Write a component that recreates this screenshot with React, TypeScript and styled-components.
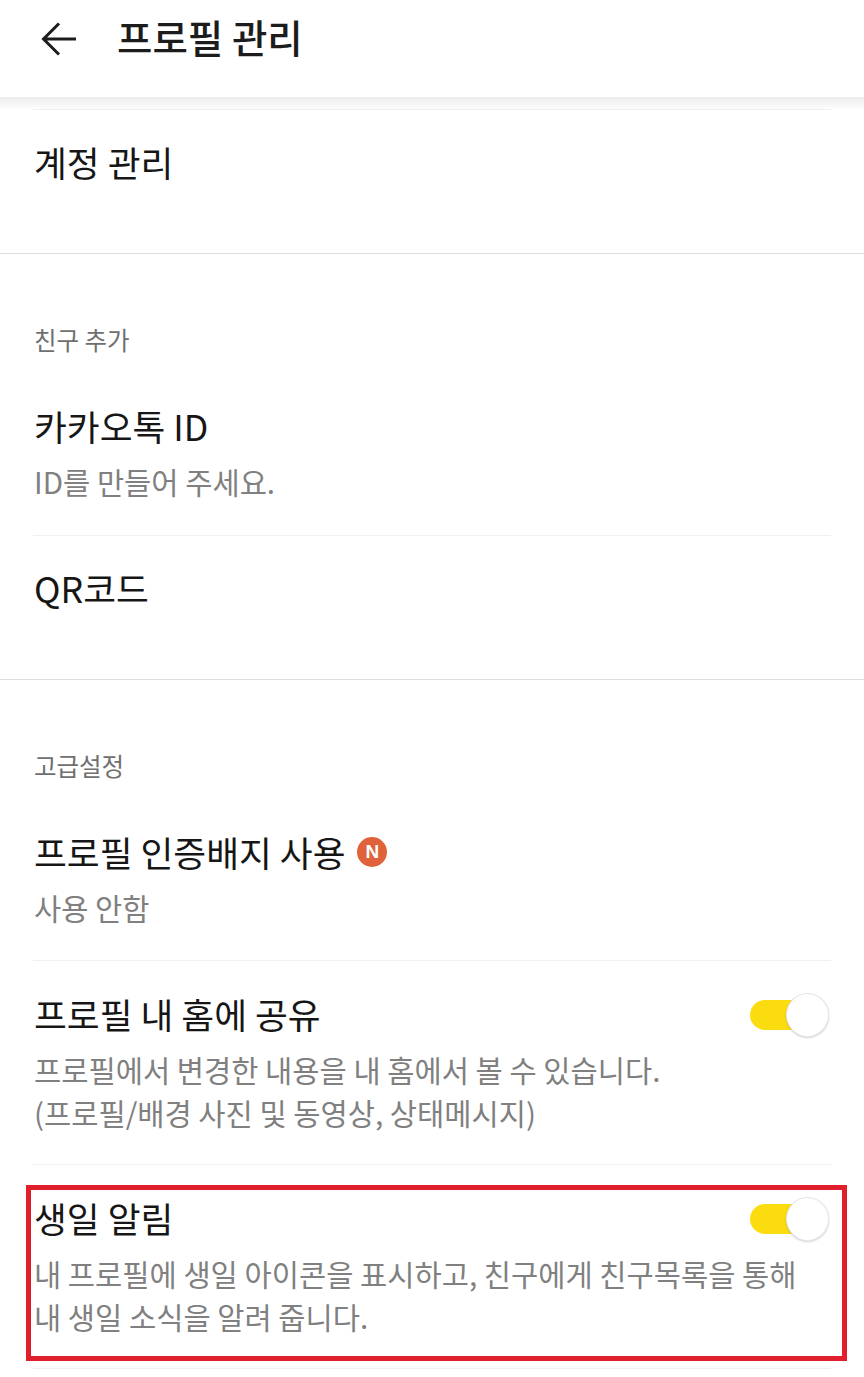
import React from 'react';
import styled, { createGlobalStyle } from 'styled-components';

const Global = createGlobalStyle`
  html, body { margin: 0; padding: 0; background: #fff; }
  body { font-family: "Noto Sans CJK KR", "Noto Sans", sans-serif; color: #1a1a1a; }
`;
const Page = styled.div`
  position: relative;
  width: 864px;
  height: 1377px;
  overflow: hidden;
  background: #fff;
`;
const Header = styled.header`
  height: 97px;
  display: flex;
  align-items: center;
  padding-left: 40px;
  gap: 39px;
  background: #fff;
`;
const Shade = styled.div`
  height: 12px;
  background: linear-gradient(#ececec, #fdfdfd);
`;
const BackIcon = styled.svg`
  width: 38px;
  height: 38px;
  margin-top: -20px;
  display: block;
`;
const Title = styled.h1`
  margin: -25px 0 0;
  font-size: 38.5px;
  font-weight: 500;
  line-height: 1.2;
  color: #1c1c1c;
`;
const Section = styled.section<{ $h: number; $last?: boolean }>`
  height: ${(p) => p.$h}px;
  box-sizing: border-box;
  border-bottom: ${(p) => (p.$last ? 'none' : '1px solid #dedede')};
`;
const Label = styled.div<{ $top: number }>`
  padding: ${(p) => p.$top}px 34px 0;
  font-size: 24.5px;
  line-height: 34px;
  color: #6f6f6f;
`;
const Row = styled.div<{ $h: number; $line?: boolean; $pad: number }>`
  height: ${(p) => p.$h}px;
  box-sizing: border-box;
  margin: 0 33px;
  padding: ${(p) => p.$pad}px 1px 0;
  display: flex;
  justify-content: space-between;
  align-items: flex-start;
  border-top: ${(p) => (p.$line ? '1px solid #f0f0f0' : 'none')};
`;
const Texts = styled.div`
  display: flex;
  flex-direction: column;
  min-width: 0;
`;
const Name = styled.div`
  display: flex;
  align-items: center;
  gap: 12px;
  font-size: 35.7px;
  line-height: 48px;
  color: #161616;
  white-space: nowrap;
`;
const Desc = styled.div<{ $mt: number }>`
  margin-top: ${(p) => p.$mt}px;
  font-size: 29.6px;
  line-height: 43px;
  color: #808080;
  white-space: nowrap;
`;
const NBadge = styled.span`
  width: 30px;
  height: 30px;
  border-radius: 50%;
  background: #e0623a;
  color: #fff;
  font-family: "Liberation Sans", sans-serif;
  font-size: 19px;
  font-weight: 700;
  line-height: 30px;
  text-align: center;
`;
const Toggle = styled.div`
  position: relative;
  flex: none;
  width: 78px;
  height: 30px;
  margin: 10px 2px 0 0;
  border-radius: 15px;
  background: #fbdc0e;
`;
const Knob = styled.span`
  position: absolute;
  right: -1px;
  top: -7px;
  width: 43px;
  height: 44px;
  box-sizing: border-box;
  border-radius: 50%;
  background: #fff;
  border: 1px solid #e6e6e6;
  box-shadow: 0 1px 2px rgba(0, 0, 0, 0.18);
`;
const Highlight = styled.div`
  position: absolute;
  left: 26px;
  top: 1185px;
  width: 821px;
  height: 176px;
  box-sizing: border-box;
  border: 5px solid #e01f2d;
  pointer-events: none;
`;

export default function App() {
  return (
    <Page>
      <Global />
      <Header>
        <BackIcon viewBox="0 0 38 38" fill="none" stroke="#1c1c1c" strokeWidth="3" aria-hidden="true">
          <path d="M36 19H4M19 3.5 3.5 19 19 34.5" />
        </BackIcon>
        <Title>프로필 관리</Title>
      </Header>
      <Shade />
      <Section $h={145}>
        <Row $h={144} $line $pad={28}>
          <Texts>
            <Name>계정 관리</Name>
          </Texts>
        </Row>
      </Section>
      <Section $h={426}>
        <Label $top={69}>친구 추가</Label>
        <Row $h={178} $pad={45}>
          <Texts>
            <Name>카카오톡 ID</Name>
            <Desc $mt={10}>ID를 만들어 주세요.</Desc>
          </Texts>
        </Row>
        <Row $h={144} $line $pad={28}>
          <Texts>
            <Name>QR코드</Name>
          </Texts>
        </Row>
      </Section>
      <Section $h={700} $last>
        <Label $top={69}>고급설정</Label>
        <Row $h={177} $pad={45}>
          <Texts>
            <Name>
              프로필 인증배지 사용
              <NBadge>N</NBadge>
            </Name>
            <Desc $mt={10}>사용 안함</Desc>
          </Texts>
        </Row>
        <Row $h={204} $line $pad={29}>
          <Texts>
            <Name>프로필 내 홈에 공유</Name>
            <Desc $mt={10}>
              프로필에서 변경한 내용을 내 홈에서 볼 수 있습니다.
              <br />
              (프로필/배경 사진 및 동영상, 상태메시지)
            </Desc>
          </Texts>
          <Toggle>
            <Knob />
          </Toggle>
        </Row>
        <Row $h={204} $line $pad={29}>
          <Texts>
            <Name>생일 알림</Name>
            <Desc $mt={10}>
              내 프로필에 생일 아이콘을 표시하고, 친구에게 친구목록을 통해
              <br />
              내 생일 소식을 알려 줍니다.
            </Desc>
          </Texts>
          <Toggle>
            <Knob />
          </Toggle>
        </Row>
        <Row $h={10} $line $pad={0} />
      </Section>
      <Highlight />
    </Page>
  );
}
